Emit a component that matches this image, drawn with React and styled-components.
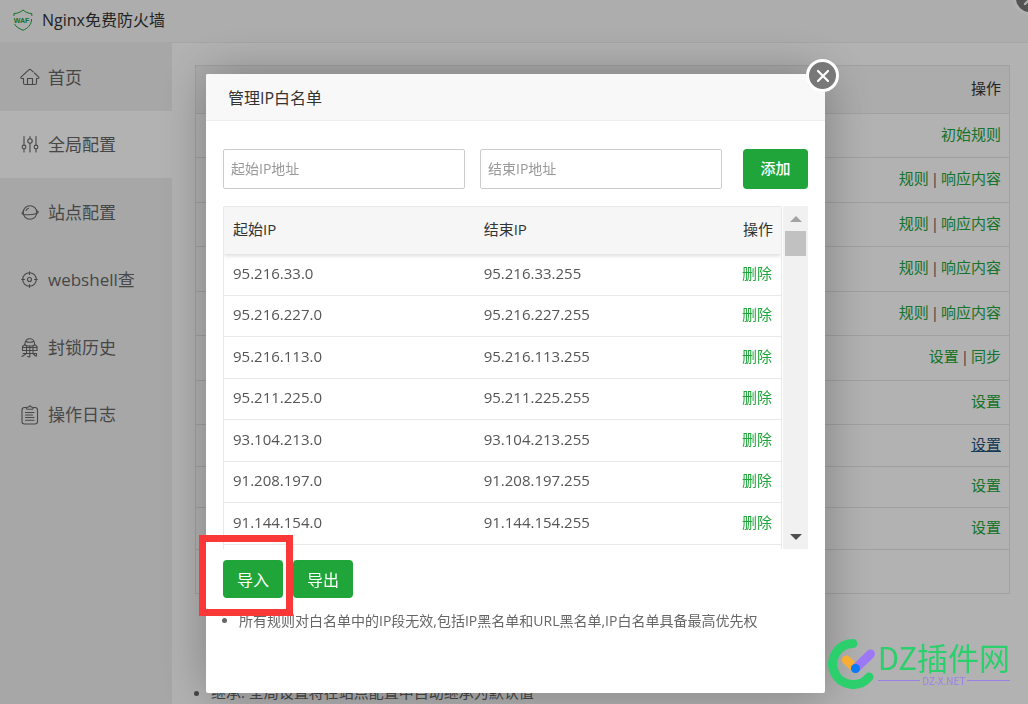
import * as React from 'react'
import styled, { createGlobalStyle, css } from 'styled-components'

const GlobalStyle = createGlobalStyle`
  * {
    box-sizing: border-box;
  }

  body {
    margin: 0;
    overflow: hidden;
    color: #555;
    background: #fff;
    font: 15px/22px 'Open Sans', 'Noto Sans CJK SC', sans-serif;
  }

  button,
  input {
    font-family: inherit;
  }
`

const green = '#20a53a'

/* ---------- page behind the dialog ---------- */

const Page = styled.div`
  position: relative;
  display: flex;
  flex-direction: column;
  height: 100vh;
  overflow: hidden;
`

const TopBar = styled.header`
  display: flex;
  align-items: center;
  gap: 8px;
  height: 43px;
  flex: none;
  padding: 0 12px 3px;
  background: #f8f8f8;
  border-bottom: 1px solid #eee;
`

const PageTitle = styled.h1`
  margin: 0;
  font-size: 16px;
  font-weight: 400;
  color: #333;
`

const Columns = styled.div`
  display: flex;
  flex: 1;
  min-height: 0;
`

const Nav = styled.nav`
  width: 172px;
  flex: none;
  background: #f0f0f0;
`

const NavList = styled.ul`
  display: flex;
  flex-direction: column;
  height: 405px;
  margin: 0;
  padding: 0;
  list-style: none;
`

const NavItem = styled.li`
  display: flex;
  flex: 1;
  background: ${({ $active }) => ($active ? '#fff' : 'transparent')};
`

const NavLink = styled.a`
  display: flex;
  flex: 1;
  align-items: center;
  gap: 8px;
  padding: 2px 20px 0;
  font-size: 17px;
  color: #666;
  text-decoration: none;
  white-space: nowrap;
`

const Main = styled.main`
  flex: 1;
  min-width: 0;
  padding: 22px 18px 0 23px;
`

const RulesTable = styled.table`
  width: 100%;
  border-collapse: collapse;
  border: 1px solid #e6e6e6;

  th,
  td {
    height: 44px;
    padding: 0 8px 4px;
    font-weight: 400;
    text-align: right;
    border-bottom: 1px solid #e6e6e6;
  }

  th {
    height: 48px;
    color: #333;
    background: #f6f6f6;
  }
`

const RuleRow = styled.tr`
  td {
    height: ${({ $short }) => ($short ? 41 : 44)}px;
  }

  &:nth-child(even) td {
    height: ${({ $short }) => ($short ? 42 : 45)}px;
  }
`

const ActionLink = styled.a`
  color: ${green};
  text-decoration: none;

  ${({ $hovered }) => $hovered && css`
    color: #23527c;
    text-decoration: underline;
  `}
`

const Divider = styled.span`
  margin: 0 2px;
`

const Tips = styled.ul`
  margin: 0;
  padding: 0 0 0 16px;
  font-size: ${({ $size }) => $size || 15}px;
  color: #666;
`

const PageTips = styled(Tips)`
  margin-top: 87px;
`

/* ---------- dialog ---------- */

const Shade = styled.div`
  position: fixed;
  inset: 0;
  display: flex;
  align-items: flex-start;
  padding: 74px 203px 11px 206px;
  background: rgba(0, 0, 0, 0.3);
`

const Dialog = styled.section`
  position: relative;
  flex: 1;
  min-width: 0;
  min-height: 619px;
  background: #fff;
  border-radius: 2px;
  box-shadow: 1px 1px 50px rgba(0, 0, 0, 0.3);
`

const DialogTitle = styled.h2`
  margin: 0;
  padding: 13px 22px 11px;
  font-size: 16px;
  font-weight: 400;
  color: #333;
  background: #f8f8f8;
  border-bottom: 1px solid #eee;
  border-radius: 2px 2px 0 0;
`

const CloseButton = styled.button`
  position: absolute;
  top: ${({ $corner }) => ($corner ? -18 : -15)}px;
  right: ${({ $corner }) => ($corner ? -18 : -14)}px;
  display: flex;
  width: 33px;
  height: 33px;
  padding: 0;
  align-items: center;
  justify-content: center;
  color: #fff;
  background: #787878;
  border: 3px solid #fff;
  border-radius: 50%;
`

const DialogBody = styled.div`
  padding: 28px 17px 0;
`

const AddForm = styled.form`
  display: flex;
  margin-bottom: 17px;
`

const IpInput = styled.input`
  flex: 1;
  min-width: 0;
  height: 40px;
  margin-right: 15px;
  padding: 0 7px 2px;
  font-size: 14px;
  border: 1px solid #ccc;
  border-radius: 2px;

  &::placeholder {
    color: #999;
  }
`

const Button = styled.button`
  min-width: 60px;
  height: 38px;
  padding: 0 14px 1px;
  font-size: 16px;
  color: #fff;
  background: ${green};
  border: 0;
  border-radius: 4px;
`

const AddButton = styled(Button)`
  min-width: 65px;
  height: 40px;
  margin-left: 6px;
  padding-bottom: 3px;
  font-size: 15px;
  font-weight: 500;
`

const ScrollBox = styled.div`
  display: flex;
  gap: 1px;
  height: 343px;
  overflow: hidden;
`

const IpTableWrap = styled.div`
  flex: 1;
  overflow: hidden;
  border: 1px solid #e8e8e8;
  border-bottom: 0;
  border-radius: 2px 2px 0 0;
`

const IpTable = styled.table`
  width: 100%;
  border-collapse: separate;
  border-spacing: 0;
  table-layout: fixed;

  thead {
    position: relative;
    box-shadow: 0 2px 4px rgba(0, 0, 0, 0.14);
  }

  th,
  td {
    padding: 0 9px 4px;
    font-weight: 400;
    text-align: left;
  }

  th {
    height: 47px;
    padding-right: 8px;
    color: #333;
    background: #f6f6f6;
  }

  td {
    height: 42px;
    border-bottom: 1px solid #e8e8e8;
  }

  tr:nth-child(even) td {
    height: 41px;
  }

  th:first-child {
    width: 45%;
  }

  th:last-child,
  td:last-child {
    padding-left: 0;
    text-align: right;
  }
`

const ScrollBar = styled.div`
  display: flex;
  flex-direction: column;
  align-items: center;
  width: 25px;
  background: #f1f1f1;
`

const ScrollArrow = styled.button`
  display: flex;
  width: 25px;
  height: 25px;
  padding: 0;
  align-items: center;
  justify-content: center;
  color: ${({ $off }) => ($off ? '#a3a3a3' : '#505050')};
  background: none;
  border: 0;
`

const ScrollTrack = styled.div`
  flex: 1;
`

const ScrollThumb = styled.div`
  width: 21px;
  height: 25px;
  background: #c1c1c1;
`

const ButtonRow = styled.div`
  display: flex;
  gap: 10px;
  margin: 11px 0 12px;
`

// wraps the button that the red frame is drawn around
const Marked = styled.div`
  position: relative;

  &::after {
    content: '';
    position: absolute;
    inset: -25px -10px -18px -24px;
    border: 7px solid #fb3838;
    pointer-events: none;
  }
`

/* ---------- watermark ---------- */

const Watermark = styled.div`
  position: fixed;
  right: 18px;
  bottom: 14px;
  display: flex;
  align-items: center;
  font-family: 'Noto Sans CJK SC', sans-serif;
`

const SiteName = styled.div`
  font-size: 31px;
  line-height: 32px;
  color: #2bcf6c;
`

const SiteDomain = styled.div`
  display: flex;
  align-items: center;
  gap: 2px;
  font-size: 10px;
  line-height: 15px;
  color: #9b80e8;

  &::before,
  &::after {
    content: '';
    flex: 1;
    height: 1px;
    background: #9b80e8;
  }
`

/* ---------- drawings ---------- */

const ShieldLogo = () => (
  <svg width="22" height="24" viewBox="0 0 22 24" fill="none" stroke={green} strokeWidth="1">
    <path d="M2 8V5.5C6 5.5 8.500 4 11 2C13.500 4 16 5.500 19.800 5.500V8" />
    <path d="M2.500 16C3.500 18.500 7 20.500 11 22.300C15.500 20.500 19.600 17 19.600 11" />
    <text
      x="9.500"
      y="14.500"
      fill={green}
      stroke="none"
      fontSize="7"
      fontWeight="700"
      textAnchor="middle"
      fontFamily="Liberation Sans, sans-serif"
    >
      WAF
    </text>
  </svg>
)

const NavIcon = ({ children }) => (
  <svg
    width="20"
    height="20"
    viewBox="0 0 20 20"
    fill="none"
    stroke="#666"
    strokeWidth="1.1"
    strokeLinecap="round"
    strokeLinejoin="round"
  >
    {children}
  </svg>
)

const HomeIcon = () => (
  <NavIcon>
    <path d="M3.500 10.500H2C.8 10.500 .5 9.500 1.200 8.800L8.800 1.800C9.500 1.100 10.300 1.100 11 1.800L13.200 3.800" />
    <path d="M14.500 5L18.600 8.800C19.300 9.500 19 10.500 17.800 10.500H16.500V15C16.500 16 16 16.500 15 16.500H5C4 16.500 3.500 16 3.500 15V10.500" />
    <path d="M7.500 16.500V10.500H12.500V16.500" />
  </NavIcon>
)

const SlidersIcon = () => (
  <NavIcon>
    <path d="M4 1.500V9.500M4 14.500V17M10 1.500V3.500M10 8.500V17M16 1.500V9.500M16 14.500V17" />
    <circle cx="4" cy="12" r="1.900" />
    <circle cx="10" cy="6" r="2.200" />
    <circle cx="16" cy="12" r="1.900" />
  </NavIcon>
)

const PlanetIcon = () => (
  <NavIcon>
    <circle cx="10" cy="9.500" r="6.800" />
    <path d="M3 9C1.300 10.200 1.500 11.500 5 11.700C9.500 12 14 11.500 16.500 10.600C18.600 9.800 18.800 8.300 17 8" />
    <path d="M6 7.500C6.500 6.300 7.300 5.600 8.500 5.200" />
  </NavIcon>
)

const TargetIcon = () => (
  <NavIcon>
    <circle cx="9.500" cy="9.500" r="6.800" />
    <circle cx="9.500" cy="9.500" r="2" />
    <path d="M9.500 1.700V4.500M9.500 14.500V17.300M1.700 9.500H4.500M14.500 9.500H17.300" />
  </NavIcon>
)

const BanIcon = () => (
  <NavIcon>
    <path d="M5 7V5.500C5 2.800 7 .8 9.700 .8S14.500 2.800 14.500 5.500V7L12 8H7.500L5 7M6.300 3.500C7.500 4.500 12 4.500 13.200 3.500" />
    <path d="M5 6.500L2.500 8.500V12.500M14.500 6.500L17 8.500V12.500M2.500 9.500H17M2.500 12.500H17M6.500 8V12.500M13 8V12.500" />
    <path d="M9.800 8V19L7.500 18.500M3 15.500H16.500V18M6.500 13V15.500L2 18.500M13 13V15.500L15.500 18" />
  </NavIcon>
)

const ClipboardIcon = () => (
  <NavIcon>
    <path d="M6 2.500H4.500C3 2.500 2 3.500 2 5V16.500C2 18 3 19 4.500 19H15C16.500 19 17.500 18 17.500 16.500V5C17.500 3.500 16.500 2.500 15 2.500H13.500" />
    <path d="M6 2.500L8.500 2L9.800 .8L11.500 2L13.500 2.500L12.500 4.300H7Z" />
    <path d="M5.500 7.500H14M5.500 10H12.500M5.500 12.500H14M5.500 15.300H14" />
  </NavIcon>
)

const CrossIcon = () => (
  <svg width="14" height="14" viewBox="0 0 14 14" stroke="currentColor" strokeWidth="2.200" strokeLinecap="round">
    <path d="M2 2L12 12M12 2L2 12" />
  </svg>
)

const SiteLogo = () => (
  <svg width="50" height="52" viewBox="0 0 50 52" fill="none" strokeWidth="9" strokeLinecap="round">
    <path d="M25 5.500A20.500 20.500 0 1 0 41 39" stroke="#2bcf6c" />
    <path d="M18.300 22L27.500 30.500" stroke="#f7ae33" />
    <path d="M27.500 30.500L42.500 16" stroke="#9c78f5" />
    <circle cx="27.500" cy="30.500" r="4.500" fill="#0a7bf5" />
  </svg>
)

/* ---------- data ---------- */

const navItems = [
  { name: '首页', Icon: HomeIcon },
  { name: '全局配置', Icon: SlidersIcon, active: true },
  { name: '站点配置', Icon: PlanetIcon },
  { name: 'webshell查', Icon: TargetIcon },
  { name: '封锁历史', Icon: BanIcon },
  { name: '操作日志', Icon: ClipboardIcon },
]

const ruleRows = [
  { actions: ['初始规则'] },
  { actions: ['规则', '响应内容'] },
  { actions: ['规则', '响应内容'] },
  { actions: ['规则', '响应内容'] },
  { actions: ['规则', '响应内容'] },
  { actions: ['设置', '同步'] },
  { actions: ['设置'] },
  { actions: ['设置'], hovered: true, short: true },
  { actions: ['设置'], short: true },
  { actions: ['设置'], short: true },
  { actions: [] },
]

const ipRanges = [
  ['95.216.33.0', '95.216.33.255'],
  ['95.216.227.0', '95.216.227.255'],
  ['95.216.113.0', '95.216.113.255'],
  ['95.211.225.0', '95.211.225.255'],
  ['93.104.213.0', '93.104.213.255'],
  ['91.208.197.0', '91.208.197.255'],
  ['91.144.154.0', '91.144.154.255'],
]

const Rule = ({ actions, hovered, short }) => (
  <RuleRow $short={short}>
    <td>
      {actions.map((name, i) => (
        <React.Fragment key={name}>
          {i > 0 && <Divider>|</Divider>}
          <ActionLink href="#" $hovered={hovered}>{name}</ActionLink>
        </React.Fragment>
      ))}
    </td>
  </RuleRow>
)

const WhiteListDialog = () => (
  <Dialog role="dialog" aria-labelledby="dialog-title">
    <DialogTitle id="dialog-title">管理IP白名单</DialogTitle>
    <CloseButton type="button" aria-label="关闭"><CrossIcon /></CloseButton>
    <DialogBody>
      <AddForm onSubmit={e => e.preventDefault()}>
        <IpInput aria-label="起始IP地址" placeholder="起始IP地址" />
        <IpInput aria-label="结束IP地址" placeholder="结束IP地址" />
        <AddButton>添加</AddButton>
      </AddForm>
      <ScrollBox>
        <IpTableWrap>
          <IpTable>
            <thead>
              <tr>
                <th>起始IP</th>
                <th>结束IP</th>
                <th>操作</th>
              </tr>
            </thead>
            <tbody>
              {ipRanges.map(([from, to]) => (
                <tr key={from}>
                  <td>{from}</td>
                  <td>{to}</td>
                  <td><ActionLink href="#">删除</ActionLink></td>
                </tr>
              ))}
            </tbody>
          </IpTable>
        </IpTableWrap>
        <ScrollBar>
          <ScrollArrow type="button" aria-label="向上" $off>
            <svg width="12" height="6" viewBox="0 0 12 6" fill="currentColor"><path d="M0 6L6 0L12 6Z" /></svg>
          </ScrollArrow>
          <ScrollTrack><ScrollThumb /></ScrollTrack>
          <ScrollArrow type="button" aria-label="向下">
            <svg width="12" height="6" viewBox="0 0 12 6" fill="currentColor"><path d="M0 0L6 6L12 0Z" /></svg>
          </ScrollArrow>
        </ScrollBar>
      </ScrollBox>
      <ButtonRow>
        <Marked><Button type="button">导入</Button></Marked>
        <Button type="button">导出</Button>
      </ButtonRow>
      <Tips $size={14}>
        <li>所有规则对白名单中的IP段无效,包括IP黑名单和URL黑名单,IP白名单具备最高优先权</li>
      </Tips>
    </DialogBody>
  </Dialog>
)

export default function App() {
  return (
    <>
      <GlobalStyle />
      <Page>
        <TopBar>
          <ShieldLogo />
          <PageTitle>Nginx免费防火墙</PageTitle>
        </TopBar>
        <Columns>
          <Nav>
            <NavList>
              {navItems.map(({ name, Icon, active }) => (
                <NavItem key={name} $active={active}>
                  <NavLink href="#"><Icon />{name}</NavLink>
                </NavItem>
              ))}
            </NavList>
          </Nav>
          <Main>
            <RulesTable>
              <thead>
                <tr><th>操作</th></tr>
              </thead>
              <tbody>
                {ruleRows.map((row, i) => <Rule key={i} {...row} />)}
              </tbody>
            </RulesTable>
            <PageTips>
              <li>继承: 全局设置将在站点配置中自动继承为默认值</li>
            </PageTips>
          </Main>
        </Columns>
        <CloseButton type="button" aria-label="关闭" $corner><CrossIcon /></CloseButton>
      </Page>
      <Shade>
        <WhiteListDialog />
      </Shade>
      <Watermark>
        <SiteLogo />
        <div>
          <SiteName>DZ插件网</SiteName>
          <SiteDomain>DZ-X.NET</SiteDomain>
        </div>
      </Watermark>
    </>
  )
}
